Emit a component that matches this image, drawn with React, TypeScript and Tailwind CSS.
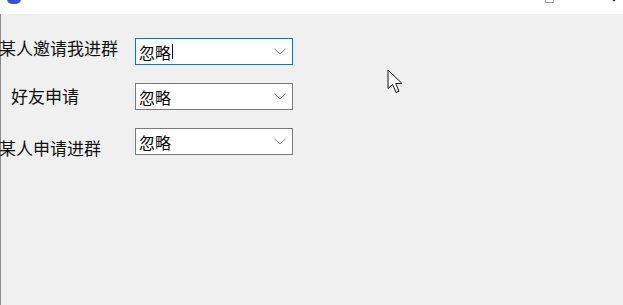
import React from "react";

const font = { fontFamily: '"Noto Sans CJK SC", "Noto Sans", sans-serif' };

function Chevron() {
  return (
    <svg width="12" height="7" viewBox="0 0 12 7" className="shrink-0">
      <path d="M0.5 0.8 L6 6 L11.5 0.8" fill="none" stroke="#777" strokeWidth="1" />
    </svg>
  );
}

function Combo({ focused, caret }: { focused?: boolean; caret?: boolean }) {
  return (
    <div
      className={
        "w-[158px] h-[27px] bg-white flex items-center pl-[3px] pr-[6px] " +
        (focused ? "border border-[#0078d7]" : "border border-[#7a7a7a]")
      }
    >
      <span className="text-[16px] leading-[18px] text-black flex items-center">
        忽略
        {caret && <span className="w-px h-[15px] bg-black ml-px" />}
      </span>
      <div className="flex-1" />
      <Chevron />
    </div>
  );
}

export default function App() {
  return (
    <div className="w-[623px] h-[305px] bg-[#f0f0f0] overflow-hidden flex flex-col" style={font}>
      {/* title bar */}
      <div className="h-[14px] bg-white relative shrink-0">
        <div className="absolute left-[7px] -top-[6px] w-[14px] h-[10px] rounded-b-[5px] bg-[#3350e0]" />
        <div className="absolute left-[545px] -top-[6px] w-[9px] h-[9px] border border-[#999]" />
        <svg className="absolute left-[607px] top-0" width="14" height="5" viewBox="0 0 14 5">
          <path d="M1 -6 L8 1 M13 -6 L6 1" stroke="#333" strokeWidth="1.2" />
        </svg>
      </div>

      {/* body */}
      <div className="flex-1 border-l border-[#8a8a8a] relative">
        <div className="flex flex-col pt-[24px] gap-[18px]">
          <div className="flex h-[27px]">
            <div className="w-[136px] -ml-[2px] text-[17px] leading-[20px] text-[#111]">某人邀请我进群</div>
            <Combo focused caret />
          </div>
          <div className="flex h-[27px]">
            <div className="w-[135px] -ml-px pl-[11px] pt-[3px] text-[17px] leading-[20px] text-[#111]">好友申请</div>
            <Combo />
          </div>
          <div className="flex h-[27px]">
            <div className="w-[136px] -ml-[2px] pt-[10px] text-[17px] leading-[20px] text-[#111] whitespace-nowrap">某人申请进群</div>
            <Combo />
          </div>
        </div>

        {/* mouse pointer */}
        <svg className="absolute left-[386px] top-[55px]" width="18" height="25" viewBox="0 0 18 25">
          <path
            d="M1 1 L1 19.5 L5.6 15.4 L9 23.5 L12 22.3 L8.7 14.5 L15 14.5 Z"
            fill="#fff"
            stroke="#111"
            strokeWidth="1"
            strokeLinejoin="round"
          />
        </svg>
      </div>
    </div>
  );
}
